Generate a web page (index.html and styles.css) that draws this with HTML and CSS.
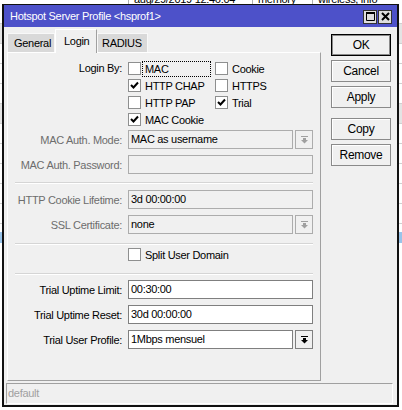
FILE: index.html
```html
<!DOCTYPE html>
<html lang="en">
<head>
    <meta charset="UTF-8">
    <title>Hotspot Server Profile</title>
    <link rel="stylesheet" href="styles.css">
</head>
<body>
    <!-- log list behind the dialog -->
    <div class="desk">
        <div class="log-strip">
            <span class="log-gap"></span>
            <span class="log-col c1">aug/29/2019 12:46:04</span>
            <span class="log-col c2">memory</span>
            <span class="log-col c3">wireless, info</span>
        </div>
        <div class="desk-row"></div>
        <div class="desk-row head"></div>
        <div class="desk-row"></div>
        <div class="desk-row"></div>
        <div class="desk-row"></div>
        <div class="desk-row head"></div>
        <div class="desk-row"></div>
        <div class="desk-row"></div>
        <div class="desk-row"></div>
        <div class="desk-row"></div>
        <div class="desk-row"></div>
        <div class="desk-row sel"></div>
    </div>

    <div class="window">
        <div class="titlebar">
            <span class="title">Hotspot Server Profile &lt;hsprof1&gt;</span>
            <div class="tb-btns">
                <span class="tb-btn">
                    <svg width="9" height="9" viewBox="0 0 9 9"><path d="M0.5 0.5h8v8h-8z M0.5 1.5h8" fill="none" stroke="#000" stroke-width="1"/><rect x="0" y="0" width="9" height="2"/></svg>
                </span>
                <span class="tb-btn">
                    <svg width="9" height="9" viewBox="0 0 9 9"><path d="M1 1L8 8M8 1L1 8" stroke="#000" stroke-width="2"/></svg>
                </span>
            </div>
        </div>

        <div class="body">
            <div class="main">
                <div class="tabs">
                    <span class="tab">General</span>
                    <span class="tab active">Login</span>
                    <span class="tab">RADIUS</span>
                </div>

                <div class="panel">
                    <!-- Login By -->
                    <div class="row checks-row">
                        <span class="label">Login By:</span>
                        <div class="checks">
                            <label class="check"><span class="box"></span><span class="ctext focus">MAC</span></label>
                            <label class="check"><span class="box"></span><span class="ctext">Cookie</span></label>
                            <label class="check"><span class="box on"><svg width="11" height="11" viewBox="0 0 11 11"><path d="M2 5l2.5 2.5L9 2.5" fill="none" stroke="#000" stroke-width="2"/></svg></span><span class="ctext">HTTP CHAP</span></label>
                            <label class="check"><span class="box"></span><span class="ctext">HTTPS</span></label>
                            <label class="check"><span class="box"></span><span class="ctext">HTTP PAP</span></label>
                            <label class="check"><span class="box on"><svg width="11" height="11" viewBox="0 0 11 11"><path d="M2 5l2.5 2.5L9 2.5" fill="none" stroke="#000" stroke-width="2"/></svg></span><span class="ctext">Trial</span></label>
                            <label class="check"><span class="box on"><svg width="11" height="11" viewBox="0 0 11 11"><path d="M2 5l2.5 2.5L9 2.5" fill="none" stroke="#000" stroke-width="2"/></svg></span><span class="ctext">MAC Cookie</span></label>
                        </div>
                    </div>

                    <!-- MAC auth -->
                    <div class="row field-row first">
                        <span class="label off">MAC Auth. Mode:</span>
                        <div class="combo">
                            <span class="field off">MAC as username</span>
                            <span class="drop off"><svg width="7" height="8" viewBox="0 0 7 8"><rect x="0" y="0" width="7" height="1"/><rect x="2" y="2" width="3" height="2"/><path d="M0 4h7l-3.5 3.5z"/></svg></span>
                        </div>
                    </div>
                    <div class="row field-row">
                        <span class="label off">MAC Auth. Password:</span>
                        <span class="field off wide"></span>
                    </div>

                    <div class="sep s1"></div>

                    <div class="row field-row">
                        <span class="label off">HTTP Cookie Lifetime:</span>
                        <span class="field off wide">3d 00:00:00</span>
                    </div>
                    <div class="row field-row">
                        <span class="label off">SSL Certificate:</span>
                        <div class="combo">
                            <span class="field off">none</span>
                            <span class="drop off"><svg width="7" height="8" viewBox="0 0 7 8"><rect x="0" y="0" width="7" height="1"/><rect x="2" y="2" width="3" height="2"/><path d="M0 4h7l-3.5 3.5z"/></svg></span>
                        </div>
                    </div>

                    <div class="sep s2"></div>

                    <div class="row split-row">
                        <span class="label"></span>
                        <label class="check"><span class="box"></span><span class="ctext">Split User Domain</span></label>
                    </div>

                    <div class="sep s3"></div>

                    <!-- trial users -->
                    <div class="row field-row trial">
                        <span class="label">Trial Uptime Limit:</span>
                        <span class="field wide">00:30:00</span>
                    </div>
                    <div class="row field-row">
                        <span class="label">Trial Uptime Reset:</span>
                        <span class="field wide">30d 00:00:00</span>
                    </div>
                    <div class="row field-row">
                        <span class="label">Trial User Profile:</span>
                        <div class="combo">
                            <span class="field">1Mbps mensuel</span>
                            <span class="drop"><svg width="7" height="8" viewBox="0 0 7 8"><rect x="0" y="0" width="7" height="1"/><rect x="2" y="2" width="3" height="2"/><path d="M0 4h7l-3.5 3.5z"/></svg></span>
                        </div>
                    </div>
                </div>
            </div>

            <div class="side">
                <button class="btn default">OK</button>
                <button class="btn">Cancel</button>
                <button class="btn">Apply</button>
                <button class="btn gap">Copy</button>
                <button class="btn">Remove</button>
            </div>
        </div>

        <div class="status">default</div>
    </div>
</body>
</html>
```

FILE: styles.css
```css
* {
    box-sizing: border-box;
}
body {
    margin: 0;
    width: 402px;
    height: 410px;
    overflow: hidden;
    position: relative;
    background: #fff;
    font-family: "Liberation Sans", Arial, sans-serif;
    font-size: 11px;
    letter-spacing: -0.3px;
    color: #000;
}

/* background list */
.desk {
    display: flex;
    flex-direction: column;
}
.log-strip {
    height: 4px;
    overflow: hidden;
    display: flex;
    align-items: flex-end;
    line-height: 10px;
}
.log-gap {
    width: 128px;
    height: 10px;
}
.log-col {
    height: 10px;
    padding-left: 5px;
    border-left: 1px solid #b0b0b0;
    margin-top: -7px;
}
.c1 { width: 124px; }
.c2 { width: 60px; }
.c3 { width: 90px; }
.desk-row {
    height: 20px;
    border-bottom: 1px solid #d0d0d0;
}
.desk-row.head {
    background: #e4e4e4;
}
.desk-row.sel {
    margin-top: 8px;
    height: 11px;
    background: #99c4ea;
    border: none;
}

/* dialog */
.window {
    position: absolute;
    left: 2px;
    top: 4px;
    width: 397px;
    height: 403px;
    border: 2px solid #111;
    border-top-width: 1px;
    background: #f0f0f0;
    display: flex;
    flex-direction: column;
}
.titlebar {
    height: 22px;
    background: #4d51c9;
    display: flex;
    align-items: center;
    justify-content: space-between;
    padding: 0 5px 0 6px;
}
.title {
    color: #fff;
}
.tb-btns {
    display: flex;
    gap: 1px;
    margin-top: 1px;
}
.tb-btn {
    width: 14px;
    height: 14px;
    border: 1px solid #333;
    background: #dedede;
    display: flex;
    align-items: center;
    justify-content: center;
}

.body {
    height: 354px;
    display: flex;
    padding: 2px 0 0 3px;
}
.main {
    width: 314px;
    display: flex;
    flex-direction: column;
}
.tabs {
    height: 23px;
    display: flex;
    align-items: flex-end;
    position: relative;
    z-index: 1;
}
.tab {
    height: 19px;
    line-height: 18px;
    padding: 0 6px;
    background: #d9d9d9;
    border: 1px solid #f8f8f8;
    border-bottom: none;
}
.tab:first-child {
    width: 48px;
}
.tab.active {
    height: 24px;
    margin-bottom: -1px;
    width: 42px;
    padding: 2px 7px 0 8px;
    background: #f0f0f0;
    border-color: #fff #a0a0a0 #f0f0f0 #fff;
}
.tab:last-child {
    width: 51px;
    padding-left: 4px;
}
.panel {
    height: 329px;
    border: 1px solid #a0a0a0;
    border-left-color: #fff;
    border-top-color: #fff;
    padding: 7px 7px 0 0;
}

/* form rows */
.row {
    display: flex;
    align-items: center;
}
.label {
    width: 114px;
    margin-right: 6px;
    text-align: right;
    white-space: nowrap;
    flex-shrink: 0;
}
.label.off {
    color: #6d6d6d;
}
.checks-row {
    align-items: flex-start;
}
.checks-row .label {
    line-height: 17px;
}
.checks {
    display: grid;
    grid-template-columns: 87px auto;
}
.check {
    height: 17px;
    display: flex;
    align-items: center;
}
.box {
    width: 13px;
    height: 13px;
    border: 1px solid #8e8f8f;
    background: #fff;
    display: flex;
    align-items: center;
    justify-content: center;
    flex-shrink: 0;
}
.ctext {
    margin-left: 1px;
    padding: 0 2px;
    height: 16px;
    line-height: 14px;
    border: 1px solid transparent;
    white-space: nowrap;
}
.ctext.focus {
    width: 69px;
    border: 1px dotted #000;
}

.field-row {
    height: 19px;
    margin-top: 6px;
}
.field-row.first {
    margin-top: 2px;
}
.field-row.trial {
    margin-top: 5px;
}
.field {
    height: 19px;
    width: 165px;
    border: 1px solid #7f7f7f;
    background: #fff;
    padding: 0 2px;
    line-height: 17px;
    white-space: nowrap;
}
.field.wide {
    width: 185px;
}
.field.off {
    border-color: #acacac;
    background: #f0f0f0;
}
.combo {
    display: flex;
    gap: 2px;
}
.drop {
    width: 18px;
    height: 19px;
    border: 1px solid #7f7f7f;
    background: #f0f0f0;
    display: flex;
    align-items: center;
    justify-content: center;
}
.drop svg {
    fill: #000;
}
.drop.off {
    border-color: #acacac;
}
.drop.off svg {
    fill: #a0a0a0;
}

.sep {
    margin-left: 7px;
    height: 2px;
    border-top: 1px solid #d5d5d5;
    border-bottom: 1px solid #fff;
}
.sep.s1 {
    margin-top: 8px;
}
.sep.s1 + .row {
    margin-top: 6px;
}
.sep.s2 {
    margin-top: 9px;
}
.split-row {
    margin-top: 1px;
}
.sep.s3 {
    margin-top: 10px;
}

/* buttons column */
.side {
    display: flex;
    flex-direction: column;
    gap: 4px;
    margin-left: 10px;
    padding-top: 5px;
}
.btn {
    width: 60px;
    height: 22px;
    font: inherit;
    letter-spacing: inherit;
    font-size: 12px;
    color: #000;
    background: #f0f0f0;
    border: 1px solid #8a8a8a;
    box-shadow: inset 1px 1px 0 #fff;
    padding: 0;
}
.btn.default {
    border-color: #000;
    box-shadow: inset 0 0 0 1px #8a8a8a;
}
.btn.gap {
    margin-top: 6px;
}

.status {
    height: 21px;
    margin: 2px 4px 1px 2px;
    border: 1px solid #a0a0a0;
    border-right-color: #fff;
    border-bottom-color: #fff;
    color: #a0a0a0;
    line-height: 18px;
    padding-left: 1px;
}
```
